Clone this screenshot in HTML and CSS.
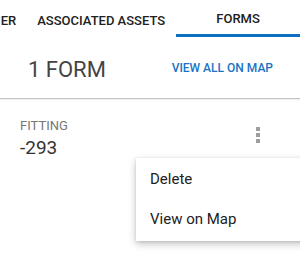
FILE: index.html
```html
<!DOCTYPE html>
<html lang="en">

<head>
  <meta charset="UTF-8">
  <meta name="viewport" content="width=device-width, initial-scale=1.0">
  <title>Forms</title>

  <link rel="stylesheet" href="styles.css">
</head>

<body>
  <nav class="tabs">
    <div class="tab-track">
      <a class="tab">SUPPLIER</a>
      <a class="tab">ASSOCIATED ASSETS</a>
      <a class="tab tab-active">FORMS</a>
    </div>
  </nav>

  <header class="summary">
    <h2 class="summary-count">1 FORM</h2>
    <a class="summary-link">VIEW ALL ON MAP</a>
  </header>

  <section class="form-item">
    <div class="form-info">
      <div class="form-type">FITTING</div>
      <div class="form-id">-293</div>
    </div>
    <button class="kebab" aria-label="More">
      <svg width="24" height="24" viewBox="0 0 24 24">
        <rect x="10" y="4" width="4" height="4" fill="#9e9e9e" />
        <rect x="10" y="10" width="4" height="4" fill="#9e9e9e" />
        <rect x="10" y="16" width="4" height="4" fill="#9e9e9e" />
      </svg>
    </button>

    <ul class="menu">
      <li class="menu-item">Delete</li>
      <li class="menu-item">View on Map</li>
    </ul>
  </section>
</body>

</html>
```

FILE: styles.css
```css
* {
  box-sizing: border-box;
}

body {
  background: #fff;
  color: #212121;
  font-family: Roboto, "Liberation Sans", sans-serif;
  height: 255px;
  margin: 0;
  overflow: hidden;
  width: 300px;
}

.tabs {
  height: 37px;
  overflow: hidden;
}

.tab-track {
  display: flex;
  margin-left: -53px;
  white-space: nowrap;
}

.tab {
  align-items: center;
  color: #212121;
  display: flex;
  font-size: 13px;
  font-weight: 500;
  height: 37px;
  padding: 3px 11px 0 10px;
}

.tab-active {
  border-bottom: 3px solid #0b6fc2;
  justify-content: center;
  padding: 3px 0 0;
  width: 125px;
}

.summary {
  align-items: center;
  border-bottom: 1px solid #c4c4c4;
  box-shadow: 0 1px 1px rgba(0, 0, 0, 0.06);
  display: flex;
  height: 62px;
  justify-content: space-between;
  padding: 0 27px 0 28px;
}

.summary-count {
  color: #444;
  font-size: 22px;
  font-weight: 400;
  margin: 4px 0 0;
}

.summary-link {
  color: #1a73c4;
  font-size: 12px;
  font-weight: 500;
}

.form-item {
  align-items: flex-start;
  display: flex;
  justify-content: space-between;
  padding: 19px 30px 0 20px;
  position: relative;
}

.form-type {
  color: #777;
  font-size: 13px;
  line-height: 16px;
}

.form-id {
  color: #333;
  font-size: 19px;
  line-height: 24px;
  margin-top: 2px;
}

.kebab {
  background: none;
  border: 0;
  height: 24px;
  margin-top: 5px;
  padding: 0;
  width: 24px;
}

.menu {
  background: #fff;
  box-shadow: 0 3px 8px rgba(0, 0, 0, 0.22), 0 1px 3px rgba(0, 0, 0, 0.12);
  left: 136px;
  list-style: none;
  margin: 0;
  padding: 1px 0 2px;
  position: absolute;
  top: 59px;
  width: 180px;
}

.menu-item {
  align-items: center;
  color: #212121;
  display: flex;
  font-size: 15px;
  height: 40px;
  padding-left: 14px;
}
```
